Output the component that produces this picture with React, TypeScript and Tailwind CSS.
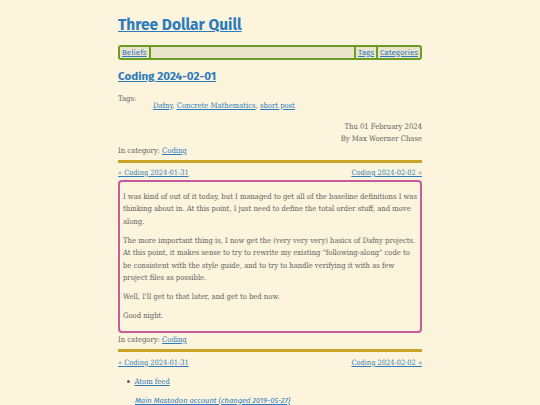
import React from 'react';

const sans = "font-['Fira_Sans','Lato',sans-serif]";
const slab = "font-['DejaVu_Serif_Condensed','Liberation_Serif',serif]";
const link = 'text-[#2b7bbd] underline';

function PostNav() {
  return (
    <div className={`flex justify-between text-[7.4px] leading-[12px] ${slab}`}>
      <a className={link}>« Coding 2024-01-31</a>
      <a className={link}>Coding 2024-02-02 »</a>
    </div>
  );
}

function Category() {
  return (
    <p className={`text-[7.6px] leading-[12px] ${slab}`}>
      In category: <a className={link}>Coding</a>
    </p>
  );
}

export default function App() {
  return (
    <div className="min-h-screen bg-[#fcf4dc] text-[#616161]">
      <div className="mx-auto w-[304px] pt-[14px]">
        <h1 className={`text-[15.5px] leading-[22px] font-bold ${sans}`}>
          <a className={link}>Three Dollar Quill</a>
        </h1>

        <nav
          className={`mt-[9px] flex h-[15px] items-stretch rounded-[3px] border-2 border-[#6c9c23] bg-[#ebe4cd] text-[8px] ${sans}`}
        >
          <a className={`${link} flex items-center border-r-2 border-[#6c9c23] px-[2px]`}>Beliefs</a>
          <div className="flex-1" />
          <a className={`${link} flex items-center border-l-2 border-[#6c9c23] px-[2px]`}>Tags</a>
          <a className={`${link} flex items-center border-l-2 border-[#6c9c23] px-[2px]`}>Categories</a>
        </nav>

        <h2 className={`mt-[7px] text-[11.6px] leading-[18px] font-bold ${sans}`}>
          <a className={link}>Coding 2024-02-01</a>
        </h2>

        <div className={`mt-[8px] text-[7.6px] leading-[12px] ${slab}`}>
          <p>Tags:</p>
          <p className="pl-[35px] -mt-[5px]">
            <a className={link}>Dafny</a>, <a className={link}>Concrete Mathematics</a>,{' '}
            <a className={link}>short post</a>
          </p>
          <div className="mt-[9px] text-right">
            <p>Thu 01 February 2024</p>
            <p>By Max Woerner Chase</p>
          </div>
        </div>

        <Category />

        <div className="mt-[3px] mb-[4px] h-[2.5px] bg-[#c9a42b]" />
        <PostNav />

        <article
          className={`mt-[1px] rounded-[4px] border-2 border-[#c95a9b] px-[3px] pt-[9px] pb-[8.5px] text-[7.6px] leading-[12.5px] ${slab}`}
        >
          <p>
            I was kind of out of it today, but I managed to get all of the baseline definitions I was thinking about
            in. At this point, I just need to define the total order stuff, and move along.
          </p>
          <p className="mt-[6.5px]">
            The more important thing is, I now get the (very very very) basics of Dafny projects. At this point, it
            makes sense to try to rewrite my existing "following-along" code to be consistent with the style guide,
            and to try to handle verifying it with as few project files as possible.
          </p>
          <p className="mt-[6.5px]">Well, I'll get to that later, and get to bed now.</p>
          <p className="mt-[6.5px]">Good night.</p>
        </article>

        <div className="mt-[1px]">
          <Category />
        </div>
        <div className="mt-[3px] mb-[5px] h-[2.5px] bg-[#c9a42b]" />
        <PostNav />

        <ul className={`mt-[7px] pl-[9px] text-[7.6px] leading-[12px] ${slab}`}>
          <li className="flex items-center gap-[5px]">
            <span className="h-[2.5px] w-[2.5px] rounded-full bg-[#616161]" />
            <a className={link}>Atom feed</a>
          </li>
        </ul>
        <p className={`mt-[7px] pl-[17px] text-[7.6px] leading-[12px] italic ${sans}`}>
          <a className={link}>Main Mastodon account (changed 2019-05-27)</a>
        </p>
      </div>
    </div>
  );
}
